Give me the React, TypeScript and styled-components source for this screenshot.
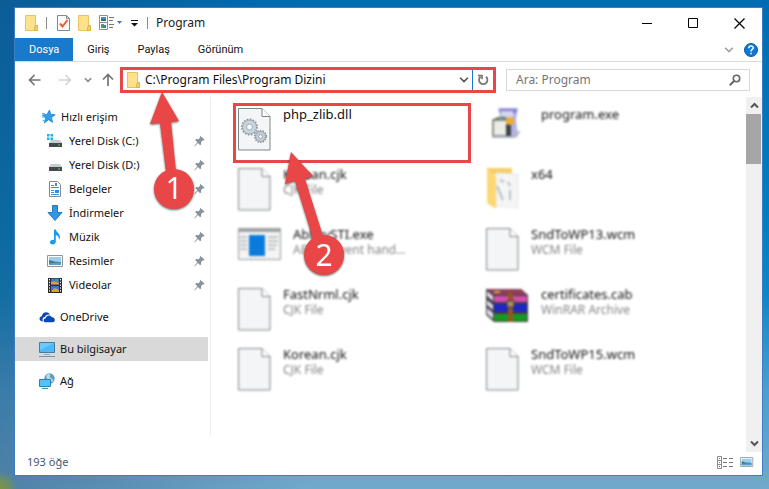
import React from 'react';
import styled, { createGlobalStyle, css } from 'styled-components';

const RED = '#e94747';

const GlobalStyle = createGlobalStyle`
  * { box-sizing: border-box; }
  body { margin: 0; }
  body, button, input {
    font-family: 'Noto Sans', 'Open Sans', sans-serif;
    font-size: 12px;
    line-height: 16px;
    color: #111;
  }
  button { border: 0; padding: 0; background: none; }
  svg { display: block; flex: none; }
`;

const Desktop = styled.div`
  min-height: 100vh;
  display: flex;
  padding: 7px 6px 13px 14px;
  background:
    radial-gradient(circle at 0 100%, #7d9440 0, #6f9060 8px, transparent 18px),
    linear-gradient(90deg, rgba(30, 70, 110, 0.4), transparent 40%),
    linear-gradient(180deg, #006cb2 0%, #0080c0 45%, #0b87c6 60%, #4c9fd0 80%, #71a9cb 100%);
`;

const Window = styled.main`
  flex: 1;
  min-width: 0;
  display: flex;
  flex-direction: column;
  background: #fff;
  border: 1px solid #3f7cc6;
`;

const TitleBar = styled.header`
  height: 30px;
  display: flex;
  align-items: center;
  justify-content: space-between;
`;

const QuickAccess = styled.div`
  display: flex;
  align-items: center;
  gap: 8px;
  padding-left: 10px;
`;

const Separator = styled.span<{ $wide?: boolean }>`
  width: 1px;
  height: 12px;
  margin-right: ${(p) => (p.$wide ? '2px' : '0')};
  background: #8b8b8b;
`;

const Title = styled.h1`
  margin: 0;
  font-size: 12px;
  font-weight: 400;
  line-height: 16px;
  color: #222;
`;

const WindowButtons = styled.div`
  display: flex;
  height: 100%;
`;

const WindowButton = styled.button`
  width: 46px;
  display: grid;
  place-items: center;
`;

const Ribbon = styled.nav`
  height: 24px;
  display: flex;
  align-items: stretch;
  border-bottom: 1px solid #d9dadb;
`;

const Tab = styled.button<{ $active?: boolean }>`
  padding: 0 14px;
  font-family: Roboto, 'Noto Sans', sans-serif;
  font-size: 11px;
  ${(p) => p.$active && css`
    background: #1979ca;
    color: #fff;
  `}
`;

const RibbonTools = styled.div`
  margin-left: auto;
  display: flex;
  align-items: center;
  gap: 10px;
  padding-right: 4px;
`;

const IconButton = styled.button`
  display: grid;
  place-items: center;
`;

const NavBar = styled.div`
  height: 35px;
  display: flex;
  align-items: center;
  padding: 0 12px 0 5px;
`;

const NavButtons = styled.div`
  display: grid;
  grid-template-columns: 30px 30px 16px 24px;
  height: 26px;
`;

const AddressBox = styled.div`
  position: relative;
  flex: 1 1 376px;
  min-width: 0;
  height: 26px;
  display: flex;
  align-items: center;
  padding-left: 4px;
  border: 3px solid ${RED};
`;

const AddressInput = styled.input`
  flex: 1;
  min-width: 0;
  margin-left: 5px;
  padding: 0;
  border: 0;
  outline: 0;
  background: transparent;
`;

const Refresh = styled(IconButton)`
  width: 21px;
  height: 100%;
  margin-left: 3px;
  border-left: 1px solid #1979ca;
`;

const SearchBox = styled.label`
  flex: 1 1 244px;
  min-width: 0;
  height: 22px;
  margin-left: 10px;
  padding: 0 8px 0 9px;
  display: flex;
  align-items: center;
  border: 1px solid #d9d9d9;
`;

const SearchInput = styled.input`
  flex: 1;
  min-width: 0;
  padding: 0;
  border: 0;
  outline: 0;
  &::placeholder { color: #767676; opacity: 1; }
`;

const Body = styled.div`
  flex: 1;
  display: flex;
`;

const Sidebar = styled.nav`
  width: 196px;
  flex: none;
  margin-bottom: 17px;
  padding: 8px 2px 0 0;
  border-right: 1px solid #ededed;
  font-size: 11px;
`;

const Group = styled.ul`
  list-style: none;
  margin: 0 0 8px;
  padding: 0;
`;

const Place = styled.a<{ $nested?: boolean; $selected?: boolean }>`
  height: 24px;
  display: flex;
  align-items: center;
  gap: 5px;
  padding: 0 3px 0 ${(p) => (p.$nested ? '32px' : '24px')};
  color: inherit;
  text-decoration: none;
  background: ${(p) => (p.$selected ? '#d9d9d9' : 'transparent')};
  & > span { flex: 1; white-space: nowrap; }
`;

const Files = styled.ul`
  flex: 1;
  min-width: 0;
  list-style: none;
  margin: 0;
  padding: 6px 0 0 22px;
  display: grid;
  grid-template-columns: repeat(auto-fill, 238px);
  grid-auto-rows: 60px;
  column-gap: 10px;
  align-content: start;
`;

const FileItem = styled.li<{ $marked?: boolean }>`
  position: relative;
  z-index: ${(p) => (p.$marked ? 1 : 0)};
  border: 3px solid ${(p) => (p.$marked ? RED : 'transparent')};
`;

const FileContent = styled.div<{ $blurred: boolean }>`
  display: flex;
  align-items: flex-start;
  gap: 12px;
  padding-left: 2px;
  filter: ${(p) => (p.$blurred ? 'blur(1px)' : 'none')};
  & > svg { margin-top: 2px; }
`;

const FileText = styled.div`
  white-space: nowrap;
`;

const FileName = styled.div`
  font-size: 13px;
`;

const FileType = styled.div`
  color: #858585;
`;

const Scrollbar = styled.div`
  width: 16px;
  display: flex;
  flex-direction: column;
  background: #f0f0f0;
`;

const ScrollButton = styled(IconButton)`
  height: 17px;
`;

const ScrollTrack = styled.div`
  flex: 1;
  padding-right: 1px;
`;

const ScrollThumb = styled.div`
  height: 50px;
  background: #a6a6a6;
`;

const StatusBar = styled.footer`
  height: 23px;
  display: flex;
  align-items: center;
  justify-content: space-between;
  padding: 0 8px 3px 12px;
  font-size: 11px;
  color: #3d5876;
`;

const ViewButtons = styled.div`
  display: flex;
  gap: 7px;
`;

const Callout = styled.svg<{ $x: number; $y: number }>`
  position: absolute;
  z-index: 2;
  left: ${(p) => p.$x}px;
  top: ${(p) => p.$y}px;
  overflow: visible;
  pointer-events: none;
  filter: drop-shadow(0 1px 1px rgba(0, 0, 0, 0.6));
`;

const Digit = styled.text`
  font-family: 'Noto Sans', sans-serif;
  font-size: 30px;
  fill: #fff;
  text-anchor: middle;
`;

const FolderIcon = () => (
  <svg width="13" height="16" viewBox="0 0 13 16">
    <path d="M.5.5h10v11h2v4H.5z" fill="#ffe18b" stroke="#e8c45f" />
    <path d="M10.500 10.500h2v5h-3v-2.500z" fill="#f6cf60" stroke="#dfb441" />
  </svg>
);

const CheckDocIcon = () => (
  <svg width="13" height="16" viewBox="0 0 13 16">
    <path d="M.5.5h9l3 3v12H.5z" fill="#f8fafb" stroke="#7e8b91" />
    <path d="M9.500.5v3h3" fill="none" stroke="#7e8b91" />
    <path d="M3 8.500l2.500 3L10.500 5" fill="none" stroke="#ef5a24" strokeWidth="2" />
  </svg>
);

const PropertiesIcon = () => (
  <svg width="24" height="16" viewBox="0 0 24 16">
    <path d="M.5.5h8v14h-8zM.5 7.500h8" fill="#fff" stroke="#8a8f94" />
    <path d="M2 2h5v2H2z" fill="#3d8fd6" />
    <path d="M2 4h5v2H2z" fill="#3a6d74" />
    <path d="M2 9h3v4H2z" fill="#4fa763" />
    <path d="M4 10h3v3H4z" fill="#2f7fd0" />
    <path d="M10 2.500h5M10 5.500h4M10 9.500h5M10 12.500h4" stroke="#777" />
    <path d="M18 6h5l-2.500 3z" fill="#3a78c2" />
  </svg>
);

const CustomizeIcon = () => (
  <svg width="8" height="8" viewBox="0 0 8 8">
    <path d="M0 1.500h7" stroke="#111" />
    <path d="M0 4h7L3.500 7.500z" fill="#111" />
  </svg>
);

const Chevron = ({ up, color = '#555', size = 9, weight = 1.5 }: { up?: boolean; color?: string; size?: number; weight?: number }) => (
  <svg width={size} height={size} viewBox="0 0 9 9">
    <path d={up ? 'M1 6.500l3.500-3.500L8 6.500' : 'M1 2.500L4.500 6 8 2.500'} fill="none" stroke={color} strokeWidth={weight} />
  </svg>
);

const Arrow = ({ dir, color }: { dir: 'left' | 'right' | 'up'; color: string }) => {
  const d = {
    left: 'M12.500 7H1.500M6.500 2L1.500 7l5 5',
    right: 'M1 7h11M7.500 2l5 5-5 5',
    up: 'M7 13V2M2 6.500l5-5 5 5',
  }[dir];
  return (
    <svg width="14" height="14" viewBox="0 0 14 14">
      <path d={d} fill="none" stroke={color} strokeWidth="1.700" />
    </svg>
  );
};

const RefreshIcon = () => (
  <svg width="12" height="12" viewBox="0 0 12 12">
    <path d="M9 2.800A4.200 4.200 0 1 1 3.500 2.800" fill="none" stroke="#777" strokeWidth="1.800" />
    <path d="M5 .8v4.400M1 1.600h4" fill="none" stroke="#777" strokeWidth="1.600" />
  </svg>
);

const SearchIcon = () => (
  <svg width="12" height="12" viewBox="0 0 12 12">
    <circle cx="7.500" cy="4.500" r="3.200" fill="none" stroke="#666" strokeWidth="1.600" />
    <path d="M5 7L.8 11.200" stroke="#666" strokeWidth="2" />
  </svg>
);

const HelpIcon = () => (
  <svg width="14" height="14" viewBox="0 0 14 14">
    <circle cx="7" cy="7" r="6.500" fill="#0f78d4" stroke="#0a5ca8" />
    <path d="M4.800 5.200c0-3 4.600-2.800 4.400-.2C9.100 6.500 7 6.500 7 8.500M7 9.700v1.600" fill="none" stroke="#fff" strokeWidth="1.500" />
  </svg>
);

const StarIcon = () => (
  <svg width="17" height="16" viewBox="0 0 17 16">
    <path d="M10.500 1l1.200 4.400 4.500.3-3.700 2.700 1 4.900-3.900-2.600L5.200 14l1.500-4.800L3.500 6l4.500-.4z" fill="#2f9fea" stroke="#1580cc" strokeWidth=".8" />
    <path d="M3 4.500h3M3 8h3M3.500 11.500h2" stroke="#55b8f4" strokeWidth="1.200" />
  </svg>
);

const DriveIcon = ({ system }: { system?: boolean }) => (
  <svg width="17" height="16" viewBox="0 0 17 16">
    {system && <path d="M0 1h2.500v2.500H0zM3.500 1H6v2.500H3.500zM0 4.500h2.500V7H0zM3.500 4.500H6V7H3.500z" fill="#16b3ee" />}
    <path d="M4 7h9l2 3H2z" fill="#c9ccce" />
    <path d="M2 10h13v4H2z" fill="#45494d" />
    <path d="M11 11.500h2v1h-2z" fill="#4be35a" />
  </svg>
);

const DocumentIcon = () => (
  <svg width="17" height="16" viewBox="0 0 17 16">
    <path d="M2.500.5h8l3 3v12h-11z" fill="#fff" stroke="#838a90" />
    <path d="M4 4.500h3M4 6.500h8M4 9.500h3M4 11.500h3M4 13.500h8" stroke="#4b8bc6" />
    <path d="M8 2h2v3H8zM8 9h4v3H8z" fill="#3c8ad4" />
  </svg>
);

const DownloadIcon = () => (
  <svg width="17" height="16" viewBox="0 0 17 16">
    <path d="M5.500.5h5v7h4.500L8 15.500l-7-8h4.500z" fill="#3494e4" stroke="#2379c4" />
  </svg>
);

const MusicIcon = () => (
  <svg width="17" height="16" viewBox="0 0 17 16">
    <path d="M7 .5h1.800c.4 3 4.700 4 4.200 8.500l-.8 1.500C12 7.500 10.500 6.500 8.800 6v6.500c0 2-1.500 3-3.300 3S3 14.500 3 13.300c0-1.800 2-2.800 4-2.300z" fill="#169bf0" />
  </svg>
);

const PictureIcon = ({ small }: { small?: boolean }) => (
  <svg width={small ? 14 : 17} height={small ? 12 : 16} viewBox={small ? '0 2 17 12' : '0 0 17 16'}>
    <path d="M.5 2.500h15v11H.5z" fill="#fff" stroke="#8f969b" />
    <path d="M2 4h12v8H2z" fill="#9bcdf0" />
    <path d="M2 7c4 1 6 2 12 2v3H2z" fill="#3f8187" />
    <path d="M2 10.500l12-1V12H2z" fill="#5aa0d4" />
  </svg>
);

const VideoIcon = () => (
  <svg width="17" height="16" viewBox="0 0 17 16">
    <path d="M1 1h14v15H1z" fill="#2c2c2c" />
    <path d="M4 1.500h8v6H4zM4 9h8v6H4z" fill="#3d74d0" />
    <path d="M4 5l4-1 4 2v1.500H4zM5 13l3-2 4 2v2H5z" fill="#d5a23a" />
    <path d="M8 2h3v3H8z" fill="#4d9d3f" />
    <path d="M2.500 2v14M13.500 2v14" stroke="#fff" strokeDasharray="1.300 1.500" />
  </svg>
);

const OneDriveIcon = () => (
  <svg width="16" height="16" viewBox="0 0 16 16">
    <path d="M4 12.500C-.3 12.500-.6 8 2.800 7.300 3 3.500 8.500 1.500 11 5.500c-3-.5-4.600.8-5 2.500C3.500 8.200 3 10.500 4 12.500z" fill="#094ab2" />
    <path d="M6.500 13.300C3.700 13 4.200 9.300 6.800 9.200 7.200 6 11.500 5.400 12.800 8.300c3.300-.3 4.200 4.200 1.200 5z" fill="#094ab2" />
  </svg>
);

const ComputerIcon = () => (
  <svg width="16" height="16" viewBox="0 0 16 16">
    <path d="M.5 1.500h15v10H.5z" fill="#4cb8f8" stroke="#3c7fa8" />
    <path d="M1 2h14L1 9z" fill="#83d2ff" opacity=".6" />
    <path d="M5 13.500h6" stroke="#9aabb6" />
    <path d="M0 15.500h16" stroke="#7895a8" />
  </svg>
);

const NetworkIcon = () => (
  <svg width="16" height="16" viewBox="0 0 16 16">
    <circle cx="10.500" cy="5.500" r="5.200" fill="#5c9fbd" />
    <path d="M7 3c2-3 5-2 4 0s2 2 3 4-1 2-3 1-3-1-4-5z" fill="#b4dbe8" />
    <path d="M.5 6.500h11v7H.5z" fill="#59c1fa" stroke="#2b81b3" />
    <path d="M3 15.500h6" stroke="#5e88a2" />
  </svg>
);

const PinIcon = () => (
  <svg width="11" height="12" viewBox="0 0 11 12">
    <path d="M6 .5L10.800 5l-1.300.5-.8-.2-1.700 1.900.1 2.300-1 .8L3.900 8 .8 11.500.3 11l3-3.700L1.200 5l1-.9 2.300.2L6.300 2.500z" fill="#86919b" />
  </svg>
);

const PagePath = () => (
  <>
    <path d="M.5.500h23.500l8 8v33.500H.5z" fill="#f3f5f7" stroke="#808587" />
    <path d="M24 .5v8h8" fill="#fff" stroke="#808587" />
  </>
);

const PageIcon = () => (
  <svg width="33" height="43" viewBox="0 0 33 43"><PagePath /></svg>
);

const DllIcon = () => (
  <svg width="33" height="43" viewBox="0 0 33 43">
    <PagePath />
    <circle cx="11.500" cy="19" r="7.500" fill="none" stroke="#8795a1" strokeWidth="2" strokeDasharray="1.600 1.350" />
    <circle cx="11.500" cy="19" r="5" fill="none" stroke="#cbd5de" strokeWidth="4" />
    <circle cx="11.500" cy="19" r="6.900" fill="none" stroke="#8d9aa5" strokeWidth=".7" />
    <circle cx="11.500" cy="19" r="3" fill="#f7f9fa" stroke="#8d9aa5" strokeWidth=".8" />
    <circle cx="22.500" cy="28.500" r="5.700" fill="none" stroke="#8795a1" strokeWidth="1.800" strokeDasharray="1.400 1.160" />
    <circle cx="22.500" cy="28.500" r="3.600" fill="none" stroke="#c0ccd6" strokeWidth="3.500" />
    <circle cx="22.500" cy="28.500" r="5" fill="none" stroke="#8d9aa5" strokeWidth=".7" />
    <circle cx="22.500" cy="28.500" r="1.900" fill="#f7f9fa" stroke="#8d9aa5" strokeWidth=".8" />
  </svg>
);

const AppIcon = () => (
  <svg width="43" height="43" viewBox="0 0 43 43">
    <path d="M.5.5h42v31H.5z" fill="#f4f4f4" stroke="#969b9f" />
    <path d="M0 0h43v4H0z" fill="#9da2a6" />
    <path d="M2 8h7v2H2zM2 12h7v2H2zM2 16h7v2H2zM2 20h7v2H2zM30 8h10v2H30zM30 12h10v2H30zM30 16h9v2H30zM30 20h7v2H30z" fill="#bfc2c5" />
    <path d="M11 7h16v21H11z" fill="#0a7bdc" />
  </svg>
);

const InstallerIcon = () => (
  <svg width="43" height="43" viewBox="0 0 43 43">
    <path d="M12 0h20l-2 12 2 17H20z" fill="#b3b2e4" />
    <path d="M13 1h18l-1 4H14z" fill="#8280ce" />
    <path d="M15 3h12v7H15z" fill="#d3d3f4" />
    <path d="M7 12h16v16H7z" fill="#ecebe6" stroke="#8b9387" strokeWidth="2" />
    <path d="M8 12q7-5 15 0" fill="none" stroke="#547c57" strokeWidth="2" />
    <path d="M20 16h5v12h-5z" fill="#3d4245" />
    <circle cx="24" cy="13" r="4" fill="#f2ab32" />
    <path d="M27 24l8-1-6 7H6v-2h21z" fill="#b2b5cc" />
  </svg>
);

const OpenFolderIcon = () => (
  <svg width="33" height="43" viewBox="0 0 33 43">
    <path d="M1 0h25v7H1z" fill="#f4cf69" />
    <path d="M10 5l22 1v34l-22-2z" fill="#f4f5f5" stroke="#e6e8e9" />
    <path d="M11 18l6 14M22 14l2 4M24 22v10M14 12l4 2" stroke="#b4c1cb" strokeWidth="2" />
    <path d="M1 1l9 8v32L1 35z" fill="#fbd873" />
  </svg>
);

const ArchiveIcon = () => (
  <svg width="43" height="43" viewBox="0 0 43 43">
    <path d="M0 1h35l7 6v27H8L0 27z" fill="#4a3d45" />
    <path d="M1 1h34l6 6H8z" fill="#8d3e5c" />
    <path d="M1 3l6 5v5L1 8zM1 12l6 5v5l-6-5zM1 20l6 5v6l-6-5z" fill="#d7dce8" />
    <path d="M8 8h33v6H8z" fill="#d34caf" />
    <path d="M8 16h33v8H8z" fill="#1d27c4" />
    <path d="M8 26h33v7H8z" fill="#159a21" />
    <path d="M22 1l5 6v27h-5z" fill="#94571f" />
    <path d="M21 13h7v6h-7z" fill="#a3947c" stroke="#4b3826" />
    <path d="M8 3h6v2H8z" fill="#ceb13a" />
  </svg>
);

const ListViewIcon = () => (
  <svg width="16" height="13" viewBox="0 0 16 13">
    <path d="M.5.500h4v12h-4zM.5 4.500h4M.5 8.500h4" fill="#fff" stroke="#8a8a8a" />
    <path d="M2 2h1v1H2zM2 6h1v1H2z" fill="#2c9a58" />
    <path d="M2 10h1v1H2z" fill="#e22" />
    <path d="M6 2.500h4M12 2.500h4M6 6.500h4M12 6.500h4M6 10.500h4M12 10.500h4" stroke="#777" />
  </svg>
);

const nestedPlaces = [
  { label: 'Yerel Disk (C:)', icon: <DriveIcon system /> },
  { label: 'Yerel Disk (D:)', icon: <DriveIcon /> },
  { label: 'Belgeler', icon: <DocumentIcon /> },
  { label: 'İndirmeler', icon: <DownloadIcon /> },
  { label: 'Müzik', icon: <MusicIcon /> },
  { label: 'Resimler', icon: <PictureIcon /> },
  { label: 'Videolar', icon: <VideoIcon /> },
];

const rootPlaces = [
  { label: 'OneDrive', icon: <OneDriveIcon /> },
  { label: 'Bu bilgisayar', icon: <ComputerIcon />, selected: true },
  { label: 'Ağ', icon: <NetworkIcon /> },
];

const files = [
  { name: 'php_zlib.dll', type: '', icon: <DllIcon />, marked: true },
  { name: 'program.exe', type: '', icon: <InstallerIcon /> },
  { name: 'Korean.cjk', type: 'CJK File', icon: <PageIcon /> },
  { name: 'x64', type: '', icon: <OpenFolderIcon /> },
  { name: 'AbbyySTI.exe', type: 'ABBYY event hand...', icon: <AppIcon /> },
  { name: 'SndToWP13.wcm', type: 'WCM File', icon: <PageIcon /> },
  { name: 'FastNrml.cjk', type: 'CJK File', icon: <PageIcon /> },
  { name: 'certificates.cab', type: 'WinRAR Archive', icon: <ArchiveIcon /> },
  { name: 'Korean.cjk', type: 'CJK File', icon: <PageIcon /> },
  { name: 'SndToWP15.wcm', type: 'WCM File', icon: <PageIcon /> },
];

export default function App() {
  return (
    <>
      <GlobalStyle />
      <Desktop>
        <Window>
          <TitleBar>
            <QuickAccess>
              <FolderIcon />
              <Separator $wide />
              <IconButton aria-label="Özellikler"><CheckDocIcon /></IconButton>
              <IconButton aria-label="Yeni klasör"><FolderIcon /></IconButton>
              <IconButton aria-label="Görünüm seçenekleri"><PropertiesIcon /></IconButton>
              <IconButton aria-label="Özelleştir"><CustomizeIcon /></IconButton>
              <Separator />
              <Title>Program</Title>
            </QuickAccess>
            <WindowButtons>
              <WindowButton aria-label="Simge durumuna küçült">
                <svg width="11" height="11"><path d="M0 5.500h10" stroke="#000" /></svg>
              </WindowButton>
              <WindowButton aria-label="Ekranı kapla">
                <svg width="11" height="11"><path d="M.5.500h9v9h-9z" fill="none" stroke="#000" /></svg>
              </WindowButton>
              <WindowButton aria-label="Kapat">
                <svg width="11" height="11"><path d="M.5.500l10 10M10.500.5l-10 10" stroke="#000" strokeWidth="1.200" /></svg>
              </WindowButton>
            </WindowButtons>
          </TitleBar>

          <Ribbon>
            <Tab $active>Dosya</Tab>
            <Tab>Giriş</Tab>
            <Tab>Paylaş</Tab>
            <Tab>Görünüm</Tab>
            <RibbonTools>
              <IconButton aria-label="Şeridi genişlet"><Chevron color="#a0a0a0" size={10} /></IconButton>
              <IconButton aria-label="Yardım"><HelpIcon /></IconButton>
            </RibbonTools>
          </Ribbon>

          <NavBar>
            <NavButtons>
              <IconButton aria-label="Geri"><Arrow dir="left" color="#747474" /></IconButton>
              <IconButton aria-label="İleri"><Arrow dir="right" color="#d4d4d4" /></IconButton>
              <IconButton aria-label="Son konumlar"><Chevron color="#888" size={8} weight={1.8} /></IconButton>
              <IconButton aria-label="Yukarı"><Arrow dir="up" color="#747474" /></IconButton>
            </NavButtons>
            <AddressBox>
              <FolderIcon />
              <AddressInput aria-label="Adres" defaultValue="C:\Program Files\Program Dizini" />
              <IconButton aria-label="Önceki konumlar"><Chevron size={10} /></IconButton>
              <Refresh aria-label="Yenile"><RefreshIcon /></Refresh>
              <Callout $x={27} $y={22} width="32" height="120">
                <path d="M12 0L29 29l-8 1 5 50H16L10 31l-10 1z" fill={RED} />
                <circle cx="24" cy="97" r="20" fill={RED} />
                <Digit x="24" y="107">1</Digit>
              </Callout>
            </AddressBox>
            <SearchBox>
              <SearchInput aria-label="Ara" placeholder="Ara: Program" />
              <SearchIcon />
            </SearchBox>
          </NavBar>

          <Body>
            <Sidebar>
              <Group>
                <li><Place href="#quick"><StarIcon /><span>Hızlı erişim</span></Place></li>
                {nestedPlaces.map((p) => (
                  <li key={p.label}>
                    <Place href="#place" $nested>{p.icon}<span>{p.label}</span><PinIcon /></Place>
                  </li>
                ))}
              </Group>
              {rootPlaces.map((p) => (
                <Group key={p.label}>
                  <li><Place href="#place" $selected={p.selected}>{p.icon}<span>{p.label}</span></Place></li>
                </Group>
              ))}
            </Sidebar>
            <Files>
              {files.map((f, i) => (
                <FileItem key={i} $marked={f.marked}>
                  <FileContent $blurred={!f.marked}>
                    {f.icon}
                    <FileText>
                      <FileName>{f.name}</FileName>
                      {f.type && <FileType>{f.type}</FileType>}
                    </FileText>
                  </FileContent>
                  {f.marked && (
                    <Callout $x={49} $y={46} width="60" height="125">
                      <path d="M6 0l22 24-8 3 18 57-10 3L10 29l-10 3z" fill={RED} />
                      <circle cx="39" cy="103" r="20" fill={RED} />
                      <Digit x="39" y="114">2</Digit>
                    </Callout>
                  )}
                </FileItem>
              ))}
            </Files>
            <Scrollbar>
              <ScrollButton aria-label="Yukarı kaydır"><Chevron up weight={2} /></ScrollButton>
              <ScrollTrack><ScrollThumb /></ScrollTrack>
              <ScrollButton aria-label="Aşağı kaydır"><Chevron weight={2} /></ScrollButton>
            </Scrollbar>
          </Body>

          <StatusBar>
            <span>193 öğe</span>
            <ViewButtons>
              <IconButton aria-label="Ayrıntılar"><ListViewIcon /></IconButton>
              <IconButton aria-label="Küçük resimler"><PictureIcon small /></IconButton>
            </ViewButtons>
          </StatusBar>
        </Window>
      </Desktop>
    </>
  );
}
